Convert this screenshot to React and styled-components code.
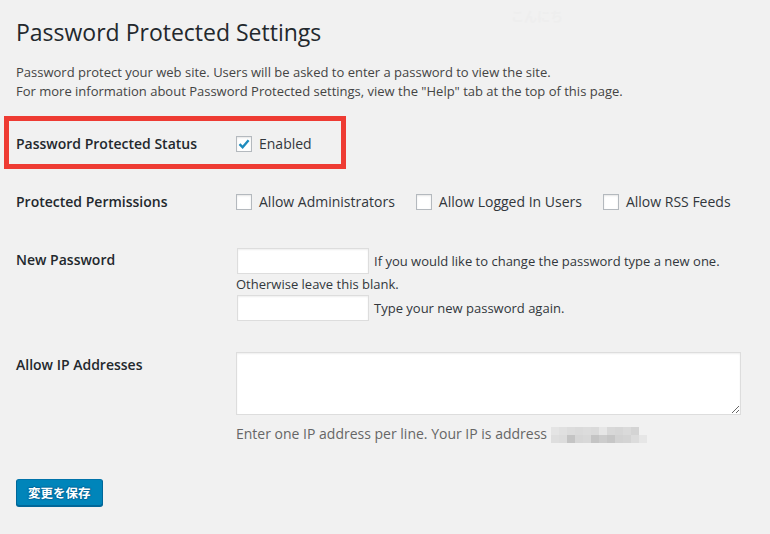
import React from "react";
import styled, { createGlobalStyle } from "styled-components";

const GlobalStyle = createGlobalStyle`
  html, body {
    margin: 0;
    padding: 0;
    background: #f1f1f1;
  }
  body {
    font-family: "Open Sans", "Noto Sans", "Noto Sans CJK JP", sans-serif;
    color: #444;
    font-size: 13px;
  }
`;

const Page = styled.div`
  position: relative;
  padding: 18px 16px 0 16px;
  min-height: 516px;
`;

const Ghost = styled.div`
  position: absolute;
  top: 6px;
  left: 511px;
  font-size: 13px;
  font-weight: 700;
  color: #eeeeee;
  font-family: "Noto Sans CJK JP", sans-serif;
`;

const Title = styled.h1`
  margin: 0;
  font-size: 23px;
  font-weight: 400;
  line-height: 29px;
  color: #23282d;
`;

const Intro = styled.p`
  margin: 16px 0 0 0;
  font-size: 13px;
  line-height: 19px;
  color: #444;
`;

const Highlight = styled.div`
  margin: 15px 0 0 -12px;
  width: 325px;
  border: 5px solid #ee3b33;
  padding: 13px 0 10px 7px;
  display: grid;
  grid-template-columns: 220px 1fr;
  align-items: center;
`;

const Row = styled.div`
  display: grid;
  grid-template-columns: 220px 1fr;
  align-items: start;
  margin-top: ${(p) => p.$top}px;
`;

const Label = styled.div`
  font-size: 14px;
  font-weight: 600;
  line-height: 20px;
  color: #23282d;
  padding-top: ${(p) => p.$pad || 0}px;
`;

const Options = styled.div`
  display: flex;
  align-items: center;
  gap: 21px;
`;

const Option = styled.label`
  display: flex;
  align-items: center;
  gap: 7px;
  font-size: 14px;
  line-height: 20px;
  color: #32373c;
`;

const Box = styled.span`
  width: 14px;
  height: 14px;
  border: 1px solid #b4b9be;
  background: #fff;
  box-shadow: inset 0 1px 2px rgba(0, 0, 0, 0.1);
  display: inline-flex;
  align-items: center;
  justify-content: center;
`;

const Field = styled.div`
  display: flex;
  flex-direction: column;
`;

const Line = styled.div`
  display: flex;
  align-items: center;
  gap: 5px;
  font-size: 13px;
  line-height: 20px;
  color: #32373c;
`;

const Input = styled.input`
  box-sizing: border-box;
  width: 132px;
  height: 26px;
  margin: 0 0 0 1px;
  border: 1px solid #ddd;
  background: #fff;
  box-shadow: inset 0 1px 2px rgba(0, 0, 0, 0.07);
  outline: none;
`;

const Plain = styled.div`
  font-size: 13px;
  line-height: 21px;
  color: #32373c;
`;

const Area = styled.textarea`
  box-sizing: border-box;
  width: 505px;
  height: 63px;
  margin: 0;
  border: 1px solid #ddd;
  background: #fff;
  box-shadow: inset 0 1px 2px rgba(0, 0, 0, 0.07);
  outline: none;
  display: block;
`;

const Description = styled.div`
  margin-top: 9px;
  display: flex;
  align-items: center;
  gap: 4px;
  font-size: 14px;
  line-height: 20px;
  color: #666;
`;

const Blur = styled.span`
  display: grid;
  grid-template-columns: repeat(12, 8px);
  grid-auto-rows: 8px;
  margin-top: 2px;
`;

const Cell = styled.span`
  background: ${(p) => p.$c};
`;

const Button = styled.button`
  margin-top: 35px;
  height: 27px;
  padding: 0 11px;
  font-family: "Noto Sans CJK JP", sans-serif;
  font-size: 12.5px;
  font-weight: 700;
  color: #fff;
  background: #0085ba;
  border: 1px solid #0073aa;
  border-color: #0073aa #006799 #006799;
  border-radius: 3px;
  box-shadow: 0 1px 0 #006799;
  text-shadow: 0 -1px 1px #006799, 1px 0 1px #006799, 0 1px 1px #006799, -1px 0 1px #006799;
  cursor: pointer;
`;

function Checkbox({ checked }) {
  return (
    <Box>
      {checked && (
        <svg width="14" height="14" viewBox="0 0 14 14">
          <path d="M2.5 7.2 L5.6 10.2 L11.6 3.2" fill="none" stroke="#1e8cbe" strokeWidth="2.4" />
        </svg>
      )}
    </Box>
  );
}

const blur = [
  ["#e4e4e4", "#e0e0e0", "#dcdcdc", "#dadada", "#dcdcdc", "#dadada", "#e6e6e6", "#d8d8d8", "#d6d6d6", "#dadada", "#d4d4d4", "#f1f1f1"],
  ["#dedede", "#dcdcdc", "#c4c4c4", "#d6d6d6", "#d8d8d8", "#c4c4c4", "#cccccc", "#c6c6c6", "#d2d2d2", "#d4d4d4", "#dcdcdc", "#e6e6e6"],
];

export default function App() {
  return (
    <Page>
      <GlobalStyle />
      <Ghost>こんにち</Ghost>
      <Title>Password Protected Settings</Title>
      <Intro>
        Password protect your web site. Users will be asked to enter a password to view the site.
        <br />
        For more information about Password Protected settings, view the "Help" tab at the top of this page.
      </Intro>

      <Highlight>
        <Label>Password Protected Status</Label>
        <Options>
          <Option>
            <Checkbox checked />
            Enabled
          </Option>
        </Options>
      </Highlight>

      <Row $top={23}>
        <Label>Protected Permissions</Label>
        <Options>
          <Option>
            <Checkbox />
            Allow Administrators
          </Option>
          <Option>
            <Checkbox />
            Allow Logged In Users
          </Option>
          <Option>
            <Checkbox />
            Allow RSS Feeds
          </Option>
        </Options>
      </Row>

      <Row $top={36}>
        <Label $pad={2}>New Password</Label>
        <Field>
          <Line>
            <Input type="password" />
            If you would like to change the password type a new one.
          </Line>
          <Plain>Otherwise leave this blank.</Plain>
          <Line>
            <Input type="password" />
            Type your new password again.
          </Line>
        </Field>
      </Row>

      <Row $top={31}>
        <Label $pad={3}>Allow IP Addresses</Label>
        <Field>
          <Area />
          <Description>
            Enter one IP address per line. Your IP is address
            <Blur>
              {blur.flat().map((c, i) => (
                <Cell key={i} $c={c} />
              ))}
            </Blur>
          </Description>
        </Field>
      </Row>

      <Button>変更を保存</Button>
    </Page>
  );
}
